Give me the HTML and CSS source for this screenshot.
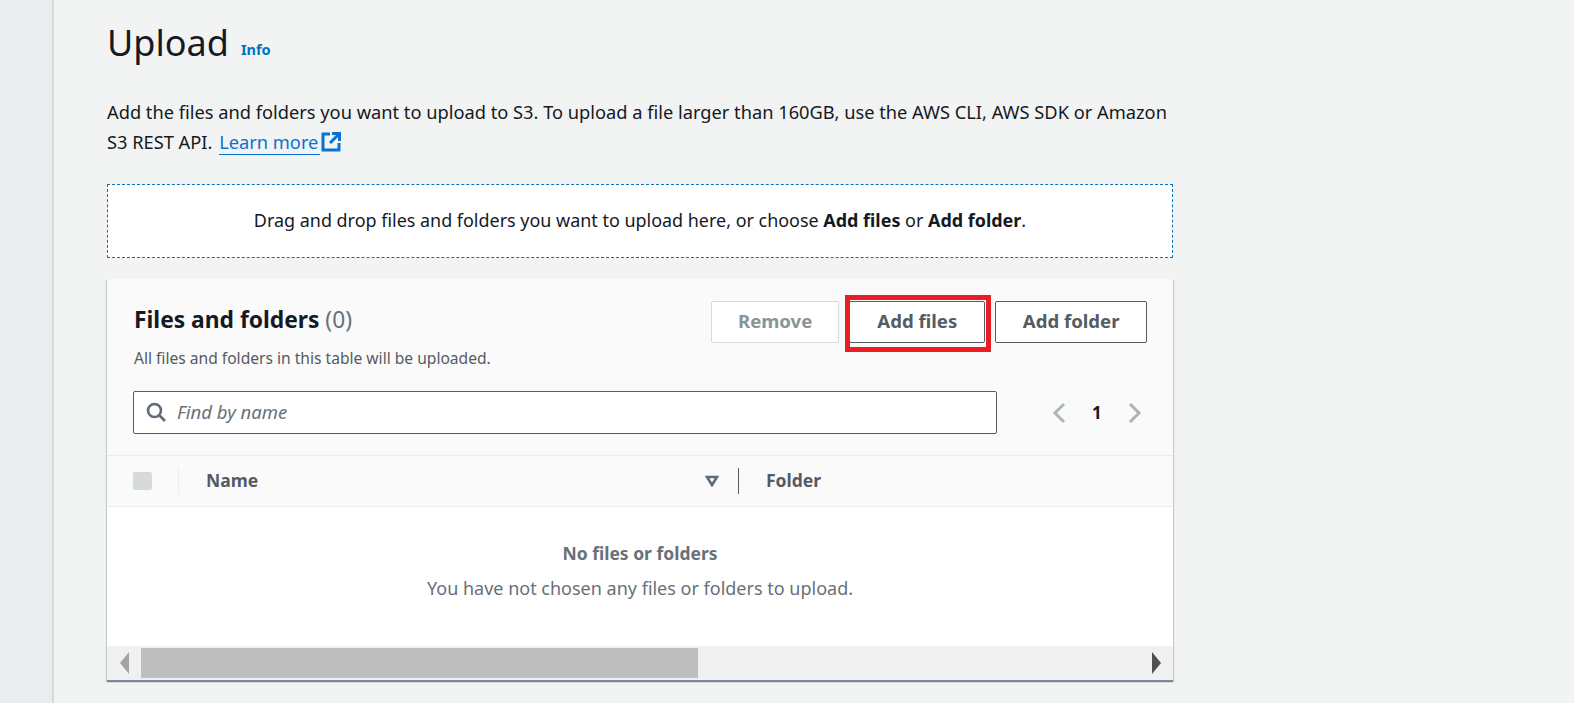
FILE: index.html
```html
<!DOCTYPE html>
<html lang="en">
<head>
    <meta charset="UTF-8">
    <meta name="viewport" content="width=device-width, initial-scale=1.0">
    <title>Upload</title>
    <link rel="stylesheet" href="styles.css">
</head>
<body>
    <div class="side-rail"></div>

    <main class="content">
        <div class="page-head">
            <h1>Upload</h1>
            <a class="info-link">Info</a>
        </div>

        <p class="intro">
            Add the files and folders you want to upload to S3. To upload a file larger than 160GB, use the AWS CLI, AWS SDK or Amazon S3 REST API.
            <a class="learn-link">Learn more</a><svg class="ext-icon" viewBox="0 0 20 20" width="20" height="20"><path d="M9 2H2v16h16v-7M11 1.500h7.500v7.500M18 2L9 11" fill="none" stroke="#0972d3" stroke-width="3"/></svg>
        </p>

        <div class="dropzone">
            <span>Drag and drop files and folders you want to upload here, or choose <b>Add files</b> or <b>Add folder</b>.</span>
        </div>

        <section class="card">
            <div class="card-head">
                <div class="card-title">
                    <h2>Files and folders <span class="count">(0)</span></h2>
                    <p>All files and folders in this table will be uploaded.</p>
                </div>
                <div class="actions">
                    <button class="btn btn-disabled">Remove</button>
                    <div class="btn-wrap">
                        <button class="btn">Add files</button>
                        <div class="highlight"></div>
                    </div>
                    <button class="btn btn-folder">Add folder</button>
                </div>
            </div>

            <div class="filter-row">
                <div class="search">
                    <svg viewBox="0 0 20 20" width="20" height="20"><circle cx="8.500" cy="8.500" r="6.500" fill="none" stroke="#5f6b7a" stroke-width="2.600"/><path d="M13 13l6 6" stroke="#5f6b7a" stroke-width="2.600"/></svg>
                    <span>Find by name</span>
                </div>
                <div class="pager">
                    <svg viewBox="0 0 14 22" width="14" height="22"><path d="M12 2L3 11l9 9" fill="none" stroke="#aab7b8" stroke-width="3"/></svg>
                    <span>1</span>
                    <svg viewBox="0 0 14 22" width="14" height="22"><path d="M2 2l9 9-9 9" fill="none" stroke="#aab7b8" stroke-width="3"/></svg>
                </div>
            </div>

            <div class="table-head">
                <div class="col-check"><div class="checkbox"></div></div>
                <div class="col-name">
                    <span>Name</span>
                    <svg viewBox="0 0 14 12" width="14" height="12"><path d="M2 2h10L7 10z" fill="none" stroke="#5f6b7a" stroke-width="2.600"/></svg>
                </div>
                <div class="col-folder">Folder</div>
            </div>

            <div class="empty">
                <b>No files or folders</b>
                <span>You have not chosen any files or folders to upload.</span>
            </div>

            <div class="scrollbar">
                <div class="arrow arrow-left"><svg viewBox="0 0 9 22" width="9" height="22"><path d="M9 0v22L0 11z" fill="#a3a3a3"/></svg></div>
                <div class="track"><div class="thumb"></div></div>
                <div class="arrow arrow-right"><svg viewBox="0 0 9 22" width="9" height="22"><path d="M0 0v22l9-11z" fill="#505050"/></svg></div>
            </div>
        </section>

        <div class="next-section"></div>
    </main>
</body>
</html>
```

FILE: styles.css
```css
* {
    box-sizing: border-box;
}

html, body {
    height: 703px;
    overflow: hidden;
}

body {
    display: flex;
    margin: 0;
    background-color: #f2f3f3;
    color: #16191f;
    font-family: "Noto Sans", Arial, sans-serif;
    font-size: 16px;
}

.side-rail {
    width: 54px;
    flex-shrink: 0;
    background-color: #eaeded;
    border-right: 2px solid #d5dbdb;
}

.content {
    width: 1066px;
    margin-left: 53px;
}

.page-head {
    display: flex;
    align-items: baseline;
    gap: 12px;
    height: 84px;
    padding-top: 16px;
}

.page-head h1 {
    margin: 0;
    font-size: 36px;
    font-weight: 400;
    line-height: 54px;
}

.info-link {
    color: #0073bb;
    font-size: 14.5px;
    font-weight: 700;
    transform: translateY(-1px);
}

.intro {
    margin: 13px 0 0;
    font-size: 18.25px;
    line-height: 30px;
}

.learn-link {
    margin-left: 2px;
    padding-right: 2px;
    color: #0972d3;
    border-bottom: 1px solid #0972d3;
}

.ext-icon {
    margin-left: 1px;
    vertical-align: -3px;
}

.dropzone {
    display: flex;
    align-items: center;
    justify-content: center;
    height: 74px;
    margin-top: 27px;
    padding-bottom: 2px;
    background-color: #ffffff;
    border: 1px dashed #0073bb;
    font-size: 17.95px;
}

.card {
    margin-top: 21px;
    background-color: #fafafa;
    box-shadow: 0 1px 1px 0 rgba(0, 28, 36, 0.3), 1px 1px 1px 0 rgba(0, 28, 36, 0.15), -1px 1px 1px 0 rgba(0, 28, 36, 0.15);
}

.card-head {
    display: flex;
    justify-content: space-between;
    height: 112px;
    padding: 23px 26px 0;
}

.card-title {
    margin-left: 1px;
}

.card-title h2 {
    margin: 0;
    font-size: 22.8px;
    line-height: 36px;
}

.count {
    color: #687078;
    font-weight: 400;
}

.card-title p {
    margin: 9px 0 0;
    color: #545b64;
    font-size: 15.6px;
    line-height: 22px;
}

.actions {
    display: flex;
    gap: 10px;
    height: 42px;
    margin-top: -1px;
}

.btn-wrap {
    position: relative;
}

.btn {
    display: block;
    height: 42px;
    padding: 0 27px 4px;
    background-color: #ffffff;
    border: 1px solid #545b64;
    border-radius: 2px;
    color: #545b64;
    font-family: inherit;
    font-size: 18.6px;
    font-weight: 700;
}

.btn-disabled {
    padding: 0 26px 4px;
    border-color: #d5dbdb;
    color: #879596;
}

.btn-folder {
    padding: 0 26.5px 4px;
}

.highlight {
    position: absolute;
    top: -6px;
    left: -4px;
    right: -6px;
    bottom: -9px;
    border: 5px solid #ec1c24;
}

.filter-row {
    display: flex;
    align-items: center;
    height: 64px;
    padding: 0 26px 21px;
}

.search {
    display: flex;
    align-items: center;
    gap: 11px;
    width: 864px;
    height: 43px;
    padding: 0 0 2px 12px;
    background-color: #ffffff;
    border: 1px solid #545b64;
    border-radius: 2px;
    color: #687078;
    font-size: 18.5px;
    font-style: italic;
}

.pager {
    display: flex;
    align-items: center;
    gap: 26px;
    margin-left: 55px;
    font-size: 17px;
    font-weight: 700;
}

.table-head {
    display: flex;
    align-items: center;
    height: 52px;
    padding-bottom: 1px;
    border-top: 1px solid #eaeded;
    border-bottom: 1px solid #eaeded;
    color: #545b64;
    font-size: 17.5px;
    font-weight: 700;
}

.col-check {
    display: flex;
    align-items: center;
    width: 72px;
    height: 26px;
    padding-left: 26px;
}

.checkbox {
    width: 19px;
    height: 18px;
    background-color: #d5dbdb;
    border-radius: 2px;
}

.col-check::after {
    content: "";
    width: 1px;
    height: 26px;
    margin-left: 26px;
    background-color: #eaeded;
}

.col-name {
    display: flex;
    align-items: center;
    justify-content: space-between;
    width: 560px;
    height: 26px;
    padding: 0 19px 0 27px;
    border-right: 1px solid #545b64;
}

.col-name span,
.col-folder {
    line-height: 24px;
    transform: translateY(-1px);
}

.col-folder {
    padding-left: 27px;
}

.empty {
    display: flex;
    flex-direction: column;
    align-items: center;
    height: 139px;
    padding-top: 33px;
    background-color: #ffffff;
    color: #687078;
    font-size: 18px;
}

.empty b {
    font-size: 17.5px;
    line-height: 26px;
}

.empty span {
    margin-top: 9px;
    line-height: 26px;
}

.scrollbar {
    display: flex;
    align-items: center;
    height: 35px;
    background-color: #f0f0f0;
    border-bottom: 1px solid #7d8998;
}

.track {
    flex: 1;
    height: 30px;
}

.thumb {
    width: 557px;
    height: 100%;
    background-color: #bebebe;
}

.arrow {
    display: flex;
    justify-content: center;
    flex-shrink: 0;
}

.arrow-left {
    width: 34px;
}

.arrow-right {
    width: 33px;
}

.next-section {
    margin-top: 22px;
    border-top: 1px solid #eaeded;
}
```
